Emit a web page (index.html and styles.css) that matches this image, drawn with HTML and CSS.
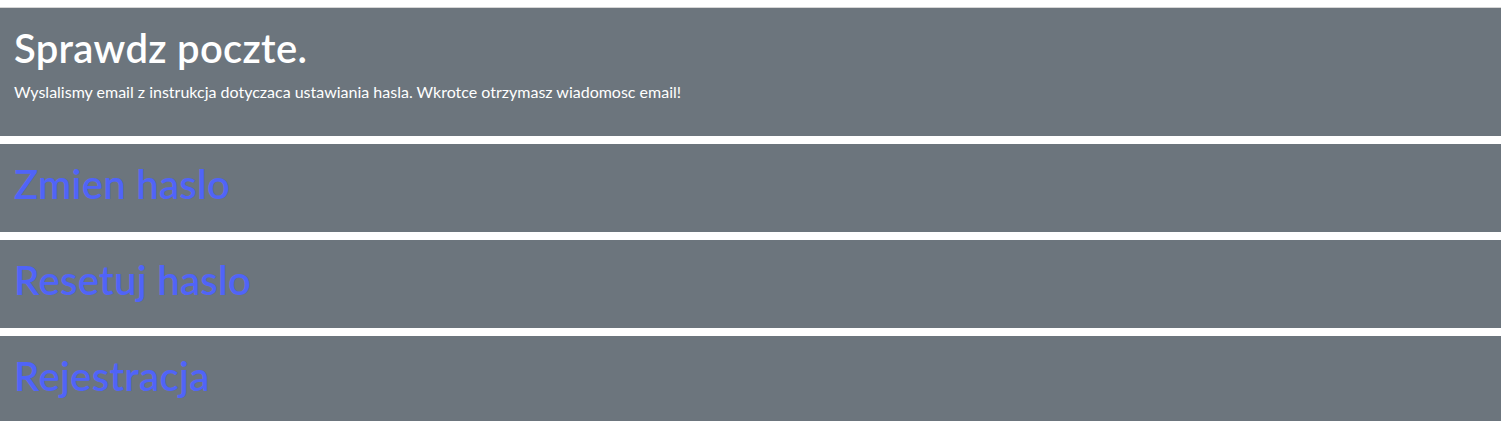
FILE: index.html
```html
<!DOCTYPE html>
<html lang="pl">
<head>
<meta charset="utf-8">
<title>Sprawdz poczte</title>
<link rel="stylesheet" href="styles.css">
</head>
<body>
<div class="topline"></div>
<main class="stack">
  <section class="card">
    <h1 class="title">Sprawdz poczte.</h1>
    <p class="text">Wyslalismy email z instrukcja dotyczaca ustawiania hasla. Wkrotce otrzymasz wiadomosc email!</p>
  </section>
  <section class="card">
    <h1 class="title"><a class="link" href="#">Zmien haslo</a></h1>
  </section>
  <section class="card">
    <h1 class="title"><a class="link" href="#">Resetuj haslo</a></h1>
  </section>
  <section class="card">
    <h1 class="title"><a class="link" href="#">Rejestracja</a></h1>
  </section>
</main>
</body>
</html>
```
FILE: styles.css
```css
html, body {
  margin: 0;
  padding: 0;
  background: #ffffff;
}
body {
  font-family: "Lato", "Noto Sans", sans-serif;
  font-size: 16px;
  line-height: 1.5;
  color: #ffffff;
  padding-top: 7px;
}
.topline {
  height: 1px;
  background: #d6d6d6;
}
.stack {
  display: flex;
  flex-direction: column;
  gap: 8px;
}
.card {
  background: #6c757d;
  padding: 16px 16px 16px 14px;
}
.title {
  margin: 0 0 8px 0;
  font-size: 40px;
  line-height: 1.2;
  font-weight: 600;
  letter-spacing: 0.3px;
}
.text {
  margin: 0 0 16px 0;
}
.link {
  color: #5064f8;
  text-decoration: none;
}
```
